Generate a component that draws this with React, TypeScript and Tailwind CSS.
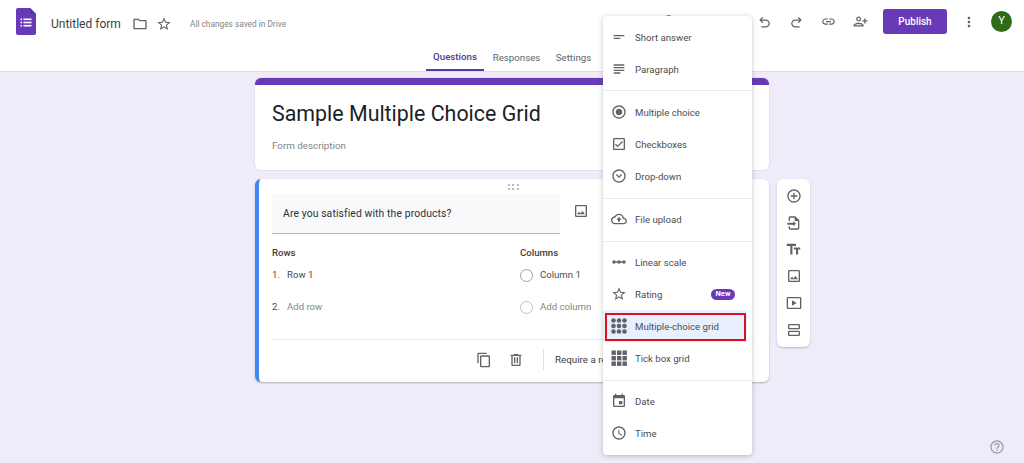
import React from "react";

const P = {
  shortAnswer: "M4 9h16v2H4zm0 4h10v2H4z",
  paragraph: "M14 17H4v2h10v-2zm6-8H4v2h16V9zM4 15h16v-2H4v2zM4 5v2h16V5H4z",
  radio: "M12 7c-2.76 0-5 2.24-5 5s2.24 5 5 5 5-2.24 5-5-2.24-5-5-5zm0-5C6.48 2 2 6.48 2 12s4.48 10 10 10 10-4.48 10-10S17.52 2 12 2zm0 18c-4.42 0-8-3.58-8-8s3.58-8 8-8 8 3.58 8 8-3.58 8-8 8z",
  check: "M19 5v14H5V5h14m0-2H5c-1.1 0-2 .9-2 2v14c0 1.1.9 2 2 2h14c1.1 0 2-.9 2-2V5c0-1.1-.9-2-2-2zM10 17l-4-4 1.4-1.4 2.6 2.6 6.6-6.6L18 9z",
  drop: "M12 2C6.48 2 2 6.48 2 12s4.48 10 10 10 10-4.48 10-10S17.52 2 12 2zm0 18c-4.42 0-8-3.58-8-8s3.58-8 8-8 8 3.58 8 8-3.58 8-8 8zm-4.6-9.6L12 15l4.6-4.6L15.2 9 12 12.2 8.8 9z",
  upload: "M19.35 10.04C18.67 6.59 15.64 4 12 4 9.11 4 6.6 5.64 5.35 8.04 2.34 8.36 0 10.91 0 14c0 3.31 2.69 6 6 6h13c2.76 0 5-2.24 5-5 0-2.64-2.05-4.78-4.65-4.96zM19 18H6c-2.21 0-4-1.79-4-4 0-2.05 1.53-3.76 3.56-3.97l1.07-.11.5-.95C8.08 7.14 9.94 6 12 6c2.62 0 4.88 1.86 5.39 4.43l.3 1.5 1.53.11c1.56.1 2.78 1.41 2.78 2.96 0 1.65-1.35 3-3 3zM8 13h2.55v3h2.9v-3H16l-4-4z",
  linear: "M19.5 9.5c-1.03 0-1.9.62-2.29 1.5h-2.92c-.39-.88-1.26-1.5-2.29-1.5s-1.9.62-2.29 1.5H6.79c-.39-.88-1.26-1.5-2.29-1.5C3.12 9.5 2 10.62 2 12s1.12 2.5 2.5 2.5c1.03 0 1.9-.62 2.29-1.5h2.92c.39.88 1.26 1.5 2.29 1.5s1.9-.62 2.29-1.5h2.92c.39.88 1.26 1.5 2.29 1.5 1.38 0 2.5-1.12 2.5-2.5s-1.12-2.5-2.5-2.5z",
  star: "M22 9.24l-7.19-.62L12 2 9.19 8.63 2 9.24l5.46 4.73L5.82 21 12 17.27 18.18 21l-1.63-7.03L22 9.24zM12 15.4l-3.76 2.27 1-4.28-3.32-2.88 4.38-.38L12 6.1l1.71 4.04 4.38.38-3.32 2.88 1 4.28L12 15.4z",
  date: "M17 12h-5v5h5v-5zM16 1v2H8V1H6v2H5c-1.11 0-1.99.9-1.99 2L3 19c0 1.1.89 2 2 2h14c1.1 0 2-.9 2-2V5c0-1.1-.9-2-2-2h-1V1h-2zm3 18H5V8h14v11z",
  time: "M11.99 2C6.47 2 2 6.48 2 12s4.47 10 9.99 10C17.52 22 22 17.52 22 12S17.52 2 11.99 2zM12 20c-4.42 0-8-3.58-8-8s3.58-8 8-8 8 3.58 8 8-3.58 8-8 8zm.5-13H11v6l5.25 3.15.75-1.23-4.5-2.67z",
  add: "M13 7h-2v4H7v2h4v4h2v-4h4v-2h-4V7zm-1-5C6.48 2 2 6.48 2 12s4.48 10 10 10 10-4.48 10-10S17.52 2 12 2zm0 18c-4.41 0-8-3.59-8-8s3.59-8 8-8 8 3.59 8 8-3.59 8-8 8z",
  title: "M2.5 4v3h5v12h3V7h5V4h-13zm19 5h-9v3h3v7h3v-7h3V9z",
  image: "M19 5v14H5V5h14m0-2H5c-1.1 0-2 .9-2 2v14c0 1.1.9 2 2 2h14c1.1 0 2-.9 2-2V5c0-1.1-.9-2-2-2zM14.14 11.86l-3 3.87L9 13.14 6 17h12l-3.86-5.14z",
  video: "M21 3H3c-1.1 0-2 .9-2 2v14c0 1.1.9 2 2 2h18c1.1 0 2-.9 2-2V5c0-1.1-.9-2-2-2zm0 16H3V5h18v14zM9 8v8l7-4z",
  section: "M19 13H5c-1.1 0-2 .9-2 2v4c0 1.1.9 2 2 2h14c1.1 0 2-.9 2-2v-4c0-1.1-.9-2-2-2zm0 6H5v-4h14v4zM19 3H5c-1.1 0-2 .9-2 2v4c0 1.1.9 2 2 2h14c1.1 0 2-.9 2-2V5c0-1.1-.9-2-2-2zm0 6H5V5h14v4z",
  importQ: "M14 2H6c-1.1 0-2 .9-2 2v5h2V4h7v5h5v11H6v-3H4v3c0 1.1.9 2 2 2h12c1.1 0 2-.9 2-2V8l-6-6zM11 11.5V9l4 4-4 4v-2.5H2v-3z",
  copy: "M16 1H4c-1.1 0-2 .9-2 2v14h2V3h12V1zm3 4H8c-1.1 0-2 .9-2 2v14c0 1.1.9 2 2 2h11c1.1 0 2-.9 2-2V7c0-1.1-.9-2-2-2zm0 16H8V7h11v14z",
  trash: "M15 4V3H9v1H4v2h1v13c0 1.1.9 2 2 2h10c1.1 0 2-.9 2-2V6h1V4h-5zm2 15H7V6h10v13zM9 8h2v9H9zm4 0h2v9h-2z",
  folder: "M20 6h-8l-2-2H4c-1.1 0-1.99.9-1.99 2L2 18c0 1.1.9 2 2 2h16c1.1 0 2-.9 2-2V8c0-1.1-.9-2-2-2zm0 12H4V6h5.17l2 2H20v10z",
  link: "M3.9 12c0-1.71 1.39-3.1 3.1-3.1h4V7H7c-2.76 0-5 2.24-5 5s2.24 5 5 5h4v-1.9H7c-1.71 0-3.1-1.39-3.1-3.1zM8 13h8v-2H8v2zm9-6h-4v1.9h4c1.71 0 3.1 1.39 3.1 3.1s-1.39 3.1-3.1 3.1h-4V17h4c2.76 0 5-2.24 5-5s-2.24-5-5-5z",
  person: "M9 6c1.1 0 2 .9 2 2s-.9 2-2 2-2-.9-2-2 .9-2 2-2m0 10c2.7 0 5.8 1.29 6 2H3c.23-.72 3.31-2 6-2m0-12C6.79 4 5 5.79 5 8s1.79 4 4 4 4-1.79 4-4-1.79-4-4-4zm0 10c-2.67 0-8 1.34-8 4v2h16v-2c0-2.66-5.33-4-8-4zM20 10V7h-2v3h-3v2h3v3h2v-3h3v-2z",
  undo: "M8.6 4.6 10 6 7.4 8.6H14c3.6 0 6.5 2.9 6.5 6.4S17.6 21.5 14 21.5H7v-2h7c2.5 0 4.5-2 4.5-4.5s-2-4.4-4.5-4.4H7.4L10 13.2l-1.4 1.4-5-5z",
  redo: "M15.4 4.6 14 6l2.6 2.6H10c-3.6 0-6.5 2.9-6.5 6.4s2.9 6.5 6.5 6.5h7v-2h-7c-2.5 0-4.5-2-4.5-4.5s2-4.4 4.5-4.4h6.6L14 13.2l1.4 1.4 5-5z",
  more: "M12 8c1.1 0 2-.9 2-2s-.9-2-2-2-2 .9-2 2 .9 2 2 2zm0 2c-1.1 0-2 .9-2 2s.9 2 2 2 2-.9 2-2-.9-2-2-2zm0 6c-1.1 0-2 .9-2 2s.9 2 2 2 2-.9 2-2-.9-2-2-2z",
  help: "M11 18h2v-2h-2v2zm1-16C6.48 2 2 6.48 2 12s4.48 10 10 10 10-4.48 10-10S17.52 2 12 2zm0 18c-4.41 0-8-3.59-8-8s3.59-8 8-8 8 3.59 8 8-3.59 8-8 8zm0-14c-2.21 0-4 1.79-4 4h2c0-1.1.9-2 2-2s2 .9 2 2c0 2-3 1.75-3 5h2c0-2.25 3-2.5 3-5 0-2.21-1.79-4-4-4z",
  palette: "M12 2C6.49 2 2 6.49 2 12s4.49 10 10 10c1.38 0 2.5-1.12 2.5-2.5 0-.61-.23-1.2-.64-1.67-.08-.1-.13-.21-.13-.33 0-.28.22-.5.5-.5H16c3.31 0 6-2.69 6-6 0-4.96-4.49-9-10-9zm4 13h-1.77c-1.38 0-2.5 1.12-2.5 2.5 0 .61.22 1.2.63 1.67.08.09.14.2.14.33 0 .28-.22.5-.5.5-4.41 0-8-3.59-8-8s3.59-8 8-8 8 3.14 8 7c0 2.21-1.79 4-4 4z",
  eye: "M12 6c3.79 0 7.17 2.13 8.82 5.5C19.17 14.87 15.79 17 12 17s-7.17-2.13-8.82-5.5C4.83 8.13 8.21 6 12 6m0-2C7 4 2.73 7.11 1 11.5 2.73 15.89 7 19 12 19s9.27-3.11 11-7.5C21.27 7.11 17 4 12 4zm0 5c1.38 0 2.5 1.12 2.5 2.5S13.38 14 12 14s-2.5-1.12-2.5-2.5S10.62 9 12 9z",
};

function Ic({ d, c = "w-4 h-4 text-[#5f6368]" }: { d: string; c?: string }) {
  return (
    <svg viewBox="0 0 24 24" fill="currentColor" className={c}>
      <path d={d} />
    </svg>
  );
}

function GridDots() {
  const a = [2.5, 8, 13.5];
  return (
    <svg viewBox="0 0 16 16" className="w-4 h-4 text-[#5f6368]" fill="currentColor">
      {a.flatMap((y) => a.map((x) => <circle key={`${x}-${y}`} cx={x} cy={y} r="2.3" />))}
    </svg>
  );
}

function GridBoxes() {
  const a = [0.5, 6, 11.5];
  return (
    <svg viewBox="0 0 16 16" className="w-4 h-4 text-[#5f6368]" fill="currentColor">
      {a.flatMap((y) => a.map((x) => <rect key={`${x}-${y}`} x={x} y={y} width="4.4" height="4.4" />))}
    </svg>
  );
}

function HeaderBtn({ d }: { d: string }) {
  return (
    <div className="w-8 h-8 flex items-center justify-center">
      <Ic d={d} c="w-[15px] h-[15px] text-[#5f6368]" />
    </div>
  );
}

function Item({ icon, label, badge }: { icon: React.ReactNode; label: string; badge?: boolean }) {
  return (
    <div className="h-8 flex items-center pl-2 pr-[17px]">
      <div className="w-4 h-4 flex items-center justify-center">{icon}</div>
      <span className="ml-2 pt-[2px] text-[9.6px] text-[#4a4d52] flex-1">{label}</span>
      {badge && (
        <span className="h-[11px] w-[24px] rounded-full bg-[#673ab7] text-white text-[7.5px] font-bold flex items-center justify-center">
          New
        </span>
      )}
    </div>
  );
}

function ToolBtn({ d, c = "w-4 h-4 text-[#5f6368]" }: { d: string; c?: string }) {
  return (
    <div className="h-[26.7px] flex items-center justify-center">
      <Ic d={d} c={c} />
    </div>
  );
}

export default function App() {
  return (
    <div className="relative w-full h-[463px] overflow-hidden bg-[#f0ebf8] font-[Roboto,sans-serif]">
      <header className="h-[72px] bg-white border-b border-[#e0dde6]">
        <div className="h-[43px] flex items-center pl-4 pr-3">
          <svg viewBox="0 0 20 27" className="w-[20px] h-[27px] -mt-[1px]">
            <path d="M2 0h12l6 6v19a2 2 0 0 1-2 2H2a2 2 0 0 1-2-2V2a2 2 0 0 1 2-2z" fill="#673ab7" />
            <path d="M14 0l6 6h-6z" fill="#5a2fa3" />
            <g fill="#fff">
              <rect x="4.5" y="10.5" width="1.6" height="1.6" />
              <rect x="7.5" y="10.5" width="8" height="1.6" />
              <rect x="4.5" y="13.7" width="1.6" height="1.6" />
              <rect x="7.5" y="13.7" width="8" height="1.6" />
              <rect x="4.5" y="16.9" width="1.6" height="1.6" />
              <rect x="7.5" y="16.9" width="8" height="1.6" />
            </g>
          </svg>
          <span className="ml-[15px] mt-[5px] w-[70px] text-[12px] text-[#3c4043] whitespace-nowrap">Untitled form</span>
          <Ic d={P.folder} c="ml-[11px] mt-[5px] w-4 h-4 text-[#5f6368]" />
          <Ic d={P.star} c="ml-[8px] mt-[5px] w-4 h-4 text-[#5f6368]" />
          <span className="ml-[18px] mt-[6px] text-[8.3px] text-[#80868b] whitespace-nowrap">All changes saved in Drive</span>
          <div className="ml-auto flex items-center">
            <HeaderBtn d={P.palette} />
            <HeaderBtn d={P.eye} />
            <div className="ml-8 flex items-center">
              <HeaderBtn d={P.undo} />
              <HeaderBtn d={P.redo} />
              <HeaderBtn d={P.link} />
              <HeaderBtn d={P.person} />
            </div>
            <div className="ml-[7px] w-16 h-[25px] rounded-[3px] bg-[#673ab7] text-white text-[10px] font-medium flex items-center justify-center">
              Publish
            </div>
            <div className="ml-[6px] w-8 h-8 flex items-center justify-center">
              <Ic d={P.more} c="w-4 h-4 text-[#5f6368]" />
            </div>
            <div className="ml-[6px] w-[21px] h-[21px] rounded-full bg-[#2e6b1b] text-white text-[11px] flex items-center justify-center">
              Y
            </div>
          </div>
        </div>
        <div className="h-7 flex justify-center gap-[2px] text-[9.7px]">
          <div className="w-[58px] pt-[3px] flex items-center justify-center text-[#4f3a8f] font-medium border-b-2 border-[#5e35a6]">Questions</div>
          <div className="w-[61px] pt-[3px] flex items-center justify-center text-[#5f6368]">Responses</div>
          <div className="w-[49px] pt-[3px] flex items-center justify-center text-[#5f6368]">Settings</div>
        </div>
      </header>

      <main className="grid grid-cols-[1fr_514px_1fr] gap-x-2 pt-[6px]">
        <div />
        <div className="flex flex-col gap-[9px]">
          <section className="h-[92px] rounded-[6px] bg-white border-t-[7px] border-[#673ab7] shadow-[0_0_0_1px_#e4e0ec] px-[17px]">
            <h1 className="pt-[14px] text-[21.4px] leading-[30px] text-[#202124] font-normal whitespace-nowrap">Sample Multiple Choice Grid</h1>
            <p className="mt-[10px] text-[9.8px] text-[#80868b]">Form description</p>
          </section>

          <section className="relative h-[203px] rounded-[6px] bg-white border-l-4 border-[#4285f4] shadow-[0_1px_2px_rgba(60,64,67,0.35)] pl-[13px] pr-4">
            <div className="absolute left-[249px] top-[5px] w-[11px] grid grid-cols-3 gap-[2px]">
              {[0, 1, 2, 3, 4, 5].map((i) => (
                <span key={i} className="w-[2px] h-[2px] bg-[#b9bcc2]" />
              ))}
            </div>
            <div className="pt-[15px] flex items-center">
              <div className="w-[288px] h-[40px] bg-[#f8f9fa] border-b border-[#b4b8bd] flex items-center pl-[11px] text-[10.4px] tracking-[0.1px] text-[#2f3134]">
                Are you satisfied with the products?
              </div>
              <Ic d={P.image} c="ml-[13px] -mt-[6px] w-4 h-4 text-[#5f6368]" />
            </div>
            <div className="mt-[12px] grid grid-cols-[248px_1fr] text-[9.6px]">
              <div>
                <div className="h-[14px] leading-[14px] font-medium text-[#3c4043]">Rows</div>
                <div className="-mt-[1px] h-8 flex items-center text-[#4a4d52]">
                  <span className="w-[15px]">1.</span>
                  <span>Row 1</span>
                </div>
                <div className="h-8 flex items-center">
                  <span className="w-[15px] text-[#4a4d52]">2.</span>
                  <span className="text-[#80868b]">Add row</span>
                </div>
              </div>
              <div>
                <div className="h-[14px] leading-[14px] font-medium text-[#3c4043]">Columns</div>
                <div className="-mt-[1px] h-8 flex items-center text-[#4a4d52]">
                  <span className="w-[13px] h-[13px] rounded-full border border-[#9aa0a6] mr-[7px]" />
                  <span>Column 1</span>
                </div>
                <div className="h-8 flex items-center text-[#80868b]">
                  <span className="w-[13px] h-[13px] rounded-full border border-[#bdc1c6] mr-[7px]" />
                  <span>Add column</span>
                </div>
              </div>
            </div>
            <div className="mt-[16px] border-t border-[#e8eaed] h-[40px] flex items-center">
              <Ic d={P.copy} c="ml-[204px] w-4 h-4 text-[#5f6368]" />
              <Ic d={P.trash} c="ml-4 w-4 h-4 text-[#5f6368]" />
              <span className="ml-[19px] w-px h-[21px] bg-[#e0e0e0]" />
              <span className="ml-[11px] pt-[2px] text-[9.8px] text-[#3c4043] whitespace-nowrap">Require a response</span>
            </div>
          </section>
        </div>

        <div className="pt-[101px]">
          <aside className="w-[33px] h-[168px] rounded-[6px] bg-white shadow-[0_1px_2px_rgba(60,64,67,0.3)] py-[4px]">
            <ToolBtn d={P.add} />
            <ToolBtn d={P.importQ} />
            <ToolBtn d={P.title} c="w-[17px] h-[17px] text-[#5f6368]" />
            <ToolBtn d={P.image} />
            <ToolBtn d={P.video} />
            <ToolBtn d={P.section} />
          </aside>
        </div>
      </main>

      {/* open dropdown menu */}
      <div className="absolute left-[603px] top-4 w-[149px] h-[439px] rounded-[4px] bg-white shadow-[0_1px_5px_rgba(60,64,67,0.3)]">
        <div className="pt-[5px] pb-[5px] border-b border-[#e8eaed]">
          <Item icon={<Ic d={P.shortAnswer} />} label="Short answer" />
          <Item icon={<Ic d={P.paragraph} />} label="Paragraph" />
        </div>
        <div className="pt-[5px] pb-[6px] border-b border-[#e8eaed]">
          <Item icon={<Ic d={P.radio} />} label="Multiple choice" />
          <Item icon={<Ic d={P.check} />} label="Checkboxes" />
          <Item icon={<Ic d={P.drop} />} label="Drop-down" />
        </div>
        <div className="pt-[4px] pb-[6px] border-b border-[#e8eaed]">
          <Item icon={<Ic d={P.upload} />} label="File upload" />
        </div>
        <div className="pt-[4px] pb-[6px] border-b border-[#e8eaed]">
          <Item icon={<Ic d={P.linear} />} label="Linear scale" />
          <Item icon={<Ic d={P.star} />} label="Rating" badge />
          <div className="relative bg-[#e8f0fe] mr-[5px]">
            <Item icon={<GridDots />} label="Multiple-choice grid" />
            <div className="absolute left-[2px] right-[1px] top-[3px] bottom-[1px] border-2 border-[#e0101e]" />
          </div>
          <Item icon={<GridBoxes />} label="Tick box grid" />
        </div>
        <div className="pt-[4px]">
          <Item icon={<Ic d={P.date} />} label="Date" />
          <Item icon={<Ic d={P.time} />} label="Time" />
        </div>
      </div>

      <div className="absolute left-[989px] top-[439px]">
        <Ic d={P.help} c="w-4 h-4 text-[#9aa0a6]" />
      </div>
    </div>
  );
}
